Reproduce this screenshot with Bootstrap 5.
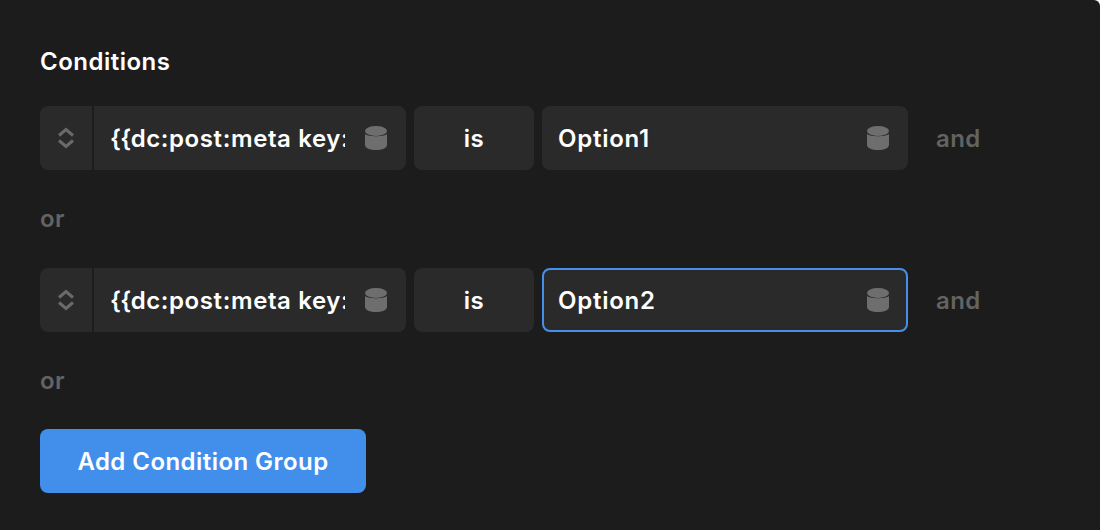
<!DOCTYPE html>
<html lang="en">
<head>
    <meta charset="UTF-8">
    <meta name="viewport" content="width=device-width, initial-scale=1.0">
    <title>Conditions</title>
    <link href="https://cdn.jsdelivr.net/npm/bootstrap@5.3.0/dist/css/bootstrap.min.css" rel="stylesheet">
    <style>
        html, body { height: 100%; background: #fff; }
        body { font-family: Inter, "Liberation Sans", sans-serif; font-weight: 600; font-size: 24px; line-height: 28px; letter-spacing: .45px; color: #fff; }
        .panel-dark { width: 1100px; height: 530px; background: #1c1c1c; border-radius: 0 6px 0 0; padding: 48px 40px 0; }
        .panel-title { font-size: 24px; font-weight: 600; line-height: 28px; letter-spacing: .5px; margin: 0 0 30px; }
        .cond-row { height: 64px; gap: 8px; }
        .field-box { background: #2a2a2a; border-radius: 8px; height: 64px; }
        .field-key { width: 366px; }
        .field-handle { width: 54px; height: 100%; border-right: 2px solid #1c1c1c; flex: none; }
        .field-key-text { width: 235px; margin-left: 16px; padding-top: 2px; overflow: hidden; white-space: nowrap; flex: none; letter-spacing: .6px; }
        .field-braces { letter-spacing: -.6px; }
        .field-op { width: 120px; padding-top: 2px; }
        .field-value { width: 366px; padding: 0 19px 0 16px; }
        .field-value.is-focus { border: 2px solid #4690eb; padding: 0 17px 0 14px; }
        .field-value-text { padding-top: 2px; letter-spacing: .75px; }
        .db-icon { width: 22px; height: 24px; flex: none; margin-left: auto; }
        .field-key .db-icon { margin-right: 19px; }
        .word-muted { color: #636363; }
        .word-and { margin-left: 20px; padding-top: 2px; }
        .word-or { height: 98px; padding-top: 35px; }
        .word-or.is-last { height: 97px; }
        .btn-add { width: 326px; height: 64px; background: #428eeb; border: 0; border-radius: 8px; color: #fff; font-size: 24px; font-weight: 600; letter-spacing: .45px; padding: 2px 0 0; }
    </style>
</head>
<body>

    <div class="panel-dark">
        <h2 class="panel-title">Conditions</h2>

        <div class="d-flex align-items-center cond-row">
            <div class="field-box field-key d-flex align-items-center">
                <div class="field-handle d-flex align-items-center justify-content-center">
                    <svg width="18" height="22" viewBox="0 0 18 22" fill="none" stroke="#6a6a6a" stroke-width="3"><path d="M2 8.5 9 2.5l7 6M2 13.5l7 6 7-6"/></svg>
                </div>
                <div class="field-key-text"><span class="field-braces">{{</span>dc:post:meta key:</div>
                <svg class="db-icon" viewBox="0 0 22 24" fill="#6e6e6e"><ellipse cx="11" cy="5" rx="11" ry="5"/><path d="M0 8c3 3 19 3 22 0v11c0 3-5 5-11 5S0 22 0 19z"/></svg>
            </div>
            <div class="field-box field-op d-flex align-items-center justify-content-center">is</div>
            <div class="field-box field-value d-flex align-items-center">
                <span class="field-value-text">Option1</span>
                <svg class="db-icon" viewBox="0 0 22 24" fill="#6e6e6e"><ellipse cx="11" cy="5" rx="11" ry="5"/><path d="M0 8c3 3 19 3 22 0v11c0 3-5 5-11 5S0 22 0 19z"/></svg>
            </div>
            <span class="word-muted word-and">and</span>
        </div>

        <div class="word-muted word-or">or</div>

        <div class="d-flex align-items-center cond-row">
            <div class="field-box field-key d-flex align-items-center">
                <div class="field-handle d-flex align-items-center justify-content-center">
                    <svg width="18" height="22" viewBox="0 0 18 22" fill="none" stroke="#6a6a6a" stroke-width="3"><path d="M2 8.5 9 2.5l7 6M2 13.5l7 6 7-6"/></svg>
                </div>
                <div class="field-key-text"><span class="field-braces">{{</span>dc:post:meta key:</div>
                <svg class="db-icon" viewBox="0 0 22 24" fill="#6e6e6e"><ellipse cx="11" cy="5" rx="11" ry="5"/><path d="M0 8c3 3 19 3 22 0v11c0 3-5 5-11 5S0 22 0 19z"/></svg>
            </div>
            <div class="field-box field-op d-flex align-items-center justify-content-center">is</div>
            <div class="field-box field-value is-focus d-flex align-items-center">
                <span class="field-value-text">Option2</span>
                <svg class="db-icon" viewBox="0 0 22 24" fill="#6e6e6e"><ellipse cx="11" cy="5" rx="11" ry="5"/><path d="M0 8c3 3 19 3 22 0v11c0 3-5 5-11 5S0 22 0 19z"/></svg>
            </div>
            <span class="word-muted word-and">and</span>
        </div>

        <div class="word-muted word-or is-last">or</div>

        <button type="button" class="btn btn-add">Add Condition Group</button>
    </div>

    <script src="https://cdn.jsdelivr.net/npm/bootstrap@5.3.0/dist/js/bootstrap.bundle.min.js"></script>
</body>
</html>
